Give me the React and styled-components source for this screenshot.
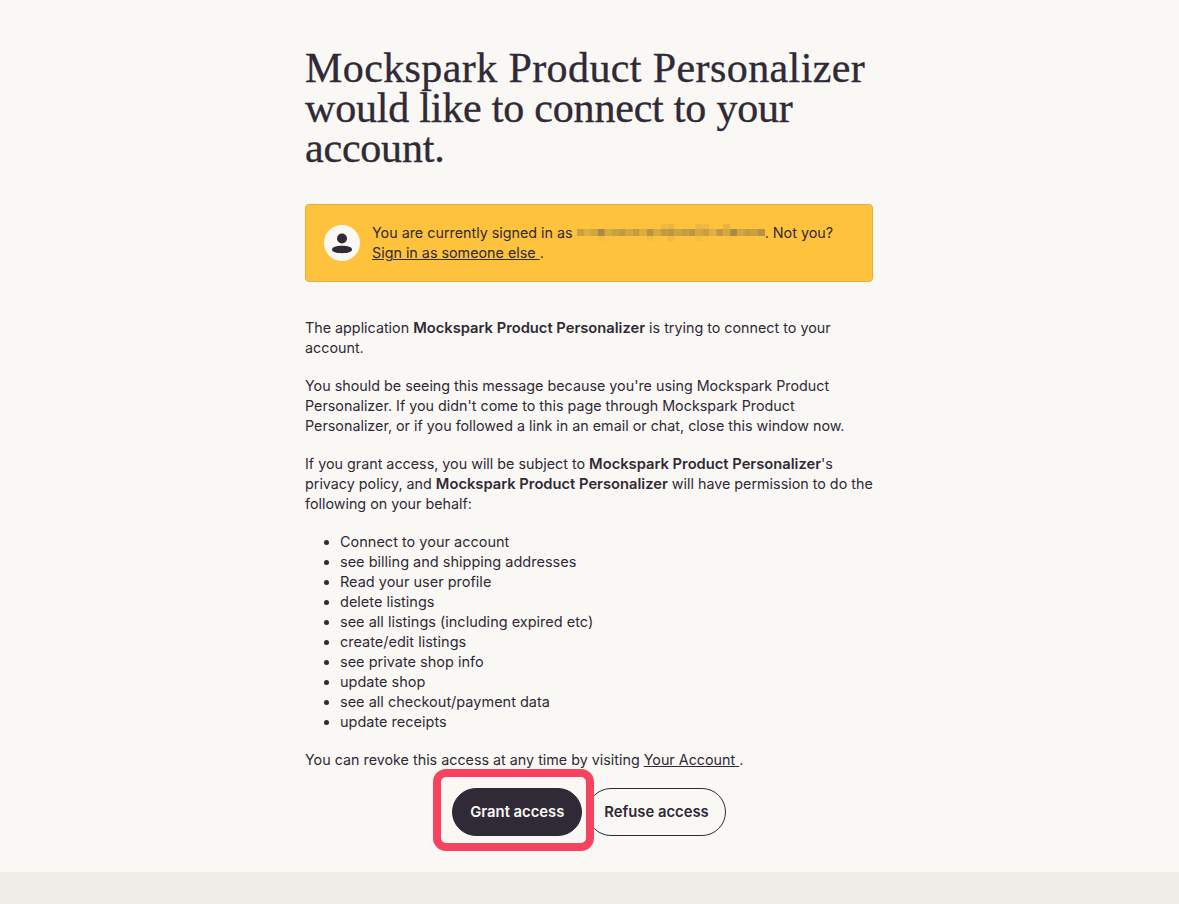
import React from 'react'
import styled, { createGlobalStyle } from 'styled-components'

const GlobalStyle = createGlobalStyle`
  html, body {
    margin: 0;
    padding: 0;
    background: #f0ece8;
  }
  body {
    font-family: Inter, "Liberation Sans", sans-serif;
    color: #2f2a35;
  }
`

const Page = styled.div`
  background: #faf8f5;
  height: 872px;
  padding-right: 1px;
  display: flex;
  justify-content: center;
`

const Column = styled.main`
  width: 568px;
  padding-top: 48px;
`

const Title = styled.h1`
  margin: 0 0 36px;
  font-family: "Liberation Serif", serif;
  font-weight: 400;
  font-size: 42px;
  line-height: 40px;
  letter-spacing: -0.2px;
  -webkit-text-stroke: 0.35px #2f2a35;
`

const TitleName = styled.span`
  letter-spacing: 0.4px;
`

const Notice = styled.div`
  box-sizing: border-box;
  height: 78px;
  display: flex;
  align-items: center;
  gap: 12px;
  padding: 0 18px;
  background: #ffc23d;
  border: 1px solid #e6ae37;
  border-radius: 4px;
  margin-bottom: 36px;
`

const Avatar = styled.div`
  width: 36px;
  height: 36px;
  flex: none;
  border-radius: 50%;
  background: #faf8f5;
  display: flex;
  align-items: center;
  justify-content: center;
`

const Text = styled.p`
  margin: 0 0 18px;
  font-size: 14.32px;
  line-height: 20px;
`

const NoticeText = styled(Text)`
  margin: 0;
`

const Strong = styled.strong`
  font-size: 14.72px;
  font-weight: 600;
`

const Mosaic = styled.svg`
  width: 188px;
  height: 18px;
  vertical-align: -4px;
`

const Link = styled.a`
  color: inherit;
  text-decoration: underline;
`

const Permissions = styled.ul`
  margin: 0 0 18px;
  padding-left: 35px;
  font-size: 14.5px;
  line-height: 20px;
`

const Actions = styled.div`
  display: flex;
  justify-content: center;
  gap: 5px;
`

const Highlight = styled.div`
  position: relative;
  &::after {
    content: '';
    position: absolute;
    inset: -19px -12px -15px -19px;
    border: 8px solid #f84360;
    border-radius: 13px;
    pointer-events: none;
  }
`

const Button = styled.button`
  box-sizing: border-box;
  height: 48px;
  padding: 0 ${p => (p.$primary ? '17px' : '16px')};
  border-radius: 24px;
  font-family: inherit;
  font-size: 14.8px;
  font-weight: 600;
  border: 1px solid #2f2a35;
  background: ${p => (p.$primary ? '#2f2a35' : 'transparent')};
  color: ${p => (p.$primary ? '#faf8f5' : '#2f2a35')};
`

const scopes = [
  'Connect to your account',
  'see billing and shipping addresses',
  'Read your user profile',
  'delete listings',
  'see all listings (including expired etc)',
  'create/edit listings',
  'see private shop info',
  'update shop',
  'see all checkout/payment data',
  'update receipts',
]

// the blurred e-mail address, one colour per 7px block
const bandColors = [
  '#c9a03f', '#dcae42', '#d0a440', '#a98a45', '#d6aa42', '#c9a240', '#bd9a43', '#d2a840', '#c49c42',
  '#dcae42', '#b99542', '#d6a941', '#c29b41', '#bb9743', '#cca341', '#c49d42', '#b99643', '#d2a741',
  '#c8a040', '#dfb043', '#c09a42', '#d4a941', '#a98a45', '#d0a540', '#c39c42', '#c89f41', '#b59343',
]
const topBlocks = [[12, '#f0b93f'], [13, '#ecb640'], [17, '#ecb640'], [18, '#efb83f'], [21, '#e6b342']]
const bottomBlocks = [[3, '#f5bc3e'], [10, '#f5bc3e'], [13, '#f2ba3e'], [17, '#f6bd3e']]

const RedactedEmail = () => (
  <Mosaic viewBox="0 0 189 18">
    {topBlocks.map(([col, fill]) => <rect key={col} x={col * 7} y="0" width="7" height="5" fill={fill} />)}
    {bandColors.map((fill, i) => <rect key={i} x={i * 7} y="5" width="7" height="7" fill={fill} />)}
    {bottomBlocks.map(([col, fill]) => <rect key={col} x={col * 7} y="12" width="7" height="5" fill={fill} />)}
  </Mosaic>
)

const App = () => (
  <>
    <GlobalStyle />
    <Page>
      <Column>
        <Title><TitleName>Mockspark Product Personalizer</TitleName> would like to connect to your account.</Title>
        <Notice>
          <Avatar>
            <svg width="22" height="24" viewBox="0 0 22 24" fill="#2f2a35">
              <circle cx="11" cy="7.5" r="5" />
              <path d="M1 18.6C1 16 5.5 14.8 11 14.8S21 16 21 18.6 16.5 22.2 11 22.2 1 21.2 1 18.6Z" />
            </svg>
          </Avatar>
          <NoticeText>
            You are currently signed in as <RedactedEmail />. Not you?<br />
            <Link href="#">Sign in as someone else </Link>.
          </NoticeText>
        </Notice>
        <Text>The application <Strong>Mockspark Product Personalizer</Strong> is trying to connect to your account.</Text>
        <Text>You should be seeing this message because you're using Mockspark Product Personalizer. If you didn't come to this page through Mockspark Product Personalizer, or if you followed a link in an email or chat, close this window now.</Text>
        <Text>If you grant access, you will be subject to <Strong>Mockspark Product Personalizer</Strong>'s privacy policy, and <Strong>Mockspark Product Personalizer</Strong> will have permission to do the following on your behalf:</Text>
        <Permissions>
          {scopes.map(s => <li key={s}>{s}</li>)}
        </Permissions>
        <Text>You can revoke this access at any time by visiting <Link href="#">Your Account </Link>.</Text>
        <Actions>
          <Highlight><Button $primary>Grant access</Button></Highlight>
          <Button>Refuse access</Button>
        </Actions>
      </Column>
    </Page>
  </>
)

export default App
